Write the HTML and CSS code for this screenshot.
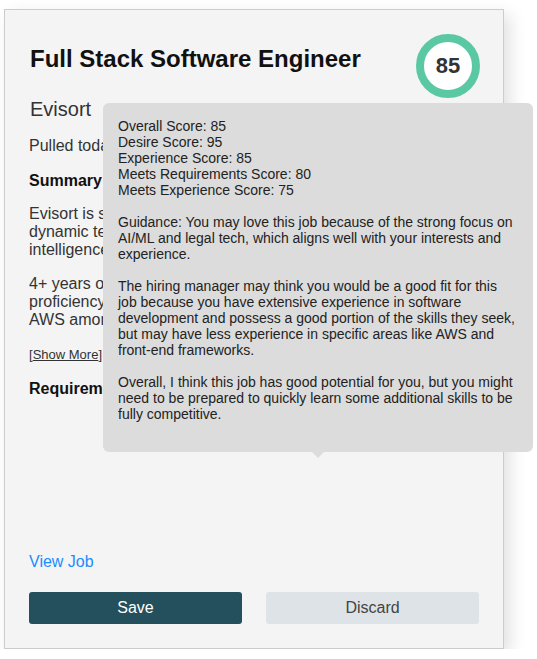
FILE: index.html
```html
<!DOCTYPE html>
<html>
<head>
<meta charset="utf-8">
<link rel="stylesheet" href="styles.css">
</head>
<body>
<div class="card">
  <div class="header">
    <h2 class="title">Full Stack Software Engineer</h2>
    <div class="score">85</div>
  </div>
  <div class="company">Evisort</div>
  <div class="pulled">Pulled today from LinkedIn</div>
  <div class="section-title">Summary</div>
  <p class="para first">Evisort is seeking a Full Stack Software Engineer to join our<br>dynamic team building AI-powered contract management and<br>intelligence solutions for legal and business teams.</p>
  <p class="para">4+ years of experience in full stack development with strong<br>proficiency in JavaScript, React, Node.js, Python, and<br>AWS among other modern technologies.</p>
  <div class="more">[<a class="more-link">Show More</a>]</div>
  <div class="section-title req">Requirements</div>
  <a class="view-job">View Job</a>
  <div class="actions">
    <button class="btn btn-save">Save</button>
    <button class="btn btn-discard">Discard</button>
  </div>
  <div class="tooltip">
    <div class="tip-block">Overall Score: 85<br>Desire Score: 95<br>Experience Score: 85<br>Meets Requirements Score: 80<br>Meets Experience Score: 75</div>
    <div class="tip-block">Guidance: You may love this job because of the strong focus on<br>AI/ML and legal tech, which aligns well with your interests and<br>experience.</div>
    <div class="tip-block">The hiring manager may think you would be a good fit for this<br>job because you have extensive experience in software<br>development and possess a good portion of the skills they seek,<br>but may have less experience in specific areas like AWS and<br>front-end frameworks.</div>
    <div class="tip-block">Overall, I think this job has good potential for you, but you might<br>need to be prepared to quickly learn some additional skills to be<br>fully competitive.</div>
  </div>
</div>
</body>
</html>
```
FILE: styles.css
```css
html, body {
  margin: 0;
  padding: 0;
  background: #ffffff;
  font-family: "Liberation Sans", Arial, sans-serif;
}
.card {
  position: relative;
  box-sizing: border-box;
  width: 500px;
  height: 640px;
  margin: 9px 0 0 4px;
  padding: 24px 24px 24px 24px;
  background: #f4f4f4;
  border: 1px solid #cccccc;
  box-shadow: 6px 6px 16px rgba(0,0,0,0.12);
  display: flex;
  flex-direction: column;
  color: #333333;
}
.header {
  display: flex;
  justify-content: space-between;
  align-items: flex-start;
}
.title {
  margin: 11px 0 0 1px;
  font-size: 24px;
  font-weight: bold;
  color: #111111;
}
.score {
  box-sizing: border-box;
  width: 64px;
  height: 64px;
  border-radius: 50%;
  border: 8px solid #5ac8a2;
  background: #ffffff;
  display: flex;
  align-items: center;
  justify-content: center;
  font-size: 22px;
  font-weight: bold;
  color: #333333;
  margin-right: -1px;
}
.company {
  font-size: 20px;
  margin-top: 0;
  margin-left: 1px;
}
.pulled {
  font-size: 16px;
  margin-top: 16px;
}
.section-title {
  font-size: 16px;
  font-weight: bold;
  margin-top: 17px;
  color: #111111;
}
.para {
  font-size: 16px;
  margin: 16px 0 0 0;
  line-height: 18px;
}
.para.first {
  margin-top: 15px;
}
.more {
  font-size: 13px;
  margin-top: 18px;
}
.more-link {
  text-decoration: underline;
}
.req {
  margin-top: 18px;
}
.view-job {
  margin-top: auto;
  font-size: 16px;
  color: #1a8cff;
}
.actions {
  display: flex;
  justify-content: space-between;
  margin-top: 21px;
}
.btn {
  width: 213px;
  height: 32px;
  border: none;
  border-radius: 3px;
  font-family: "Liberation Sans", Arial, sans-serif;
  font-size: 16px;
}
.btn-save {
  background: #244f5c;
  color: #ffffff;
}
.btn-discard {
  background: #dde3e6;
  color: #444444;
}
.tooltip {
  position: absolute;
  left: 98px;
  top: 93px;
  width: 430px;
  height: 349px;
  box-sizing: border-box;
  padding: 15px 15px;
  background: #dcdcdc;
  border-radius: 6px;
  font-size: 14px;
  line-height: 16px;
  color: #222222;
}
.tip-block {
  margin-bottom: 16px;
}
.tooltip::after {
  content: "";
  position: absolute;
  left: 209px;
  bottom: -6px;
  border-left: 6px solid transparent;
  border-right: 6px solid transparent;
  border-top: 6px solid #dcdcdc;
}
```
